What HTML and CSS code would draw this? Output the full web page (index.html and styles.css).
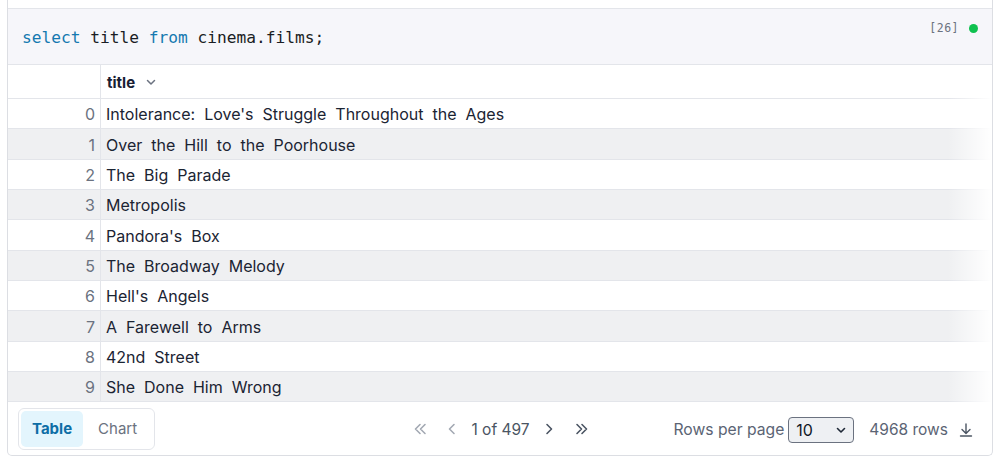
FILE: index.html
```html
<!DOCTYPE html>
<html>
<head>
<meta charset="utf-8">
<link rel="stylesheet" href="styles.css">
</head>
<body>
<div class="card">
  <div class="toolbar"></div>
  <div class="code">
    <pre class="sql"><span class="kw">select</span> title <span class="kw">from</span> cinema.films;</pre>
    <div class="status"><span class="count">[26]</span><span class="dot"></span></div>
  </div>
  <div class="table-wrap">
    <div class="row head">
      <div class="idx"></div>
      <div class="cell"><b>title</b>
        <svg class="chev" width="12" height="12" viewBox="0 0 12 12"><path d="M2.5 4.5 6 8 9.5 4.5" fill="none" stroke="#6b7280" stroke-width="1.5" stroke-linecap="round" stroke-linejoin="round"/></svg>
      </div>
    </div>
    <div class="row"><div class="idx">0</div><div class="cell">Intolerance: Love's Struggle Throughout the Ages</div></div>
    <div class="row alt"><div class="idx">1</div><div class="cell">Over the Hill to the Poorhouse</div></div>
    <div class="row"><div class="idx">2</div><div class="cell">The Big Parade</div></div>
    <div class="row alt"><div class="idx">3</div><div class="cell">Metropolis</div></div>
    <div class="row"><div class="idx">4</div><div class="cell">Pandora's Box</div></div>
    <div class="row alt"><div class="idx">5</div><div class="cell">The Broadway Melody</div></div>
    <div class="row"><div class="idx">6</div><div class="cell">Hell's Angels</div></div>
    <div class="row alt"><div class="idx">7</div><div class="cell">A Farewell to Arms</div></div>
    <div class="row"><div class="idx">8</div><div class="cell">42nd Street</div></div>
    <div class="row alt"><div class="idx">9</div><div class="cell">She Done Him Wrong</div></div>
    <div class="fade"></div>
  </div>
  <div class="footer">
    <div class="tabs">
      <span class="tab active">Table</span>
      <span class="tab">Chart</span>
    </div>
    <div class="pager">
      <svg class="pi dis" width="16" height="16" viewBox="0 0 16 16"><path d="M8 3.5 3.5 8 8 12.5M13 3.5 8.5 8 13 12.5" fill="none" stroke="currentColor" stroke-width="1.6" stroke-linecap="round" stroke-linejoin="round"/></svg>
      <svg class="pi dis" width="16" height="16" viewBox="0 0 16 16"><path d="M10 3.5 5.5 8 10 12.5" fill="none" stroke="currentColor" stroke-width="1.6" stroke-linecap="round" stroke-linejoin="round"/></svg>
      <span class="pages">1 of 497</span>
      <svg class="pi" width="16" height="16" viewBox="0 0 16 16"><path d="M6 3.5 10.5 8 6 12.5" fill="none" stroke="currentColor" stroke-width="1.6" stroke-linecap="round" stroke-linejoin="round"/></svg>
      <svg class="pi" width="16" height="16" viewBox="0 0 16 16"><path d="M3 3.5 7.5 8 3 12.5M8 3.5 12.5 8 8 12.5" fill="none" stroke="currentColor" stroke-width="1.6" stroke-linecap="round" stroke-linejoin="round"/></svg>
    </div>
    <div class="right">
      <span class="rpp">Rows per page</span>
      <span class="select">10
        <svg width="12" height="12" viewBox="0 0 12 12"><path d="M2.5 4.5 6 8 9.5 4.5" fill="none" stroke="#1f2937" stroke-width="1.6" stroke-linecap="round" stroke-linejoin="round"/></svg>
      </span>
      <span class="rows">4968 rows</span>
      <svg class="dl" width="16" height="16" viewBox="0 0 16 16"><path d="M8 2v9M4 7.5 8 11.5 12 7.5M2.5 14h11" fill="none" stroke="#4b5563" stroke-width="1.4" stroke-linecap="round" stroke-linejoin="round"/></svg>
    </div>
  </div>
</div>
</body>
</html>
```
FILE: styles.css
```css
* { box-sizing: border-box; }
html, body { margin: 0; padding: 0; background: #fff; }
body { font-family: "Inter", "Noto Sans", sans-serif; color: #1b2433; }

.card {
  margin-left: 7px;
  width: 986px;
  border: 1px solid #dcdee3;
  border-top: none;
  border-radius: 0 0 5px 5px;
  background: #fff;
  overflow: hidden;
}
.toolbar { height: 9px; border-bottom: 1px solid #e3e5ea; }

.code {
  height: 56px;
  background: #f6f6fa;
  border-bottom: 1px solid #e3e5ea;
  display: flex;
  align-items: center;
  justify-content: space-between;
  padding: 0 14px 0 14px;
  position: relative;
}
.sql {
  margin: 0;
  font-family: "DejaVu Sans Mono", monospace;
  font-size: 16.2px;
  color: #1a1d24;
  padding-top: 2px;
}
.kw { color: #1479b0; }
.status {
  align-self: flex-start;
  margin-top: 12px;
  display: flex;
  align-items: center;
  gap: 8px;
}
.count { font-family: "DejaVu Sans Mono", monospace; font-size: 11.5px; color: #6b7280; letter-spacing: 0.5px; margin-right: 2px; }
.dot { width: 9px; height: 9px; border-radius: 50%; background: #0fc14f; }

.table-wrap { position: relative; }
.row {
  display: flex;
  height: 30.35px;
  border-bottom: 1px solid #e3e5ea;
  align-items: center;
  font-size: 16px;
}
.row.head { height: 34px; font-size: 15px; color: #172033; }
.row.alt { background: #eff0f2; }
.idx {
  width: 93px;
  flex: none;
  height: 100%;
  border-right: 1px solid #e3e5ea;
  text-align: right;
  padding-right: 5px;
  color: #6b7280;
  display: flex;
  align-items: center;
  justify-content: flex-end;
  padding-top: 1px;
}
.cell { padding-left: 5px; padding-top: 1px; word-spacing: 4.5px; display: flex; align-items: center; }
.cell b { font-weight: 700; word-spacing: 0; padding-left: 1px; }
.chev { margin-left: 10px; }
.fade {
  position: absolute;
  right: 0; top: 0; bottom: 0;
  width: 44px;
  background: linear-gradient(to right, rgba(255,255,255,0), #fff);
  pointer-events: none;
}

.footer {
  height: 53px;
  display: grid;
  grid-template-columns: 1fr auto 1fr;
  align-items: center;
  padding: 0 18px 0 10px;
}
.tabs {
  justify-self: start;
  display: flex;
  align-items: center;
  border: 1px solid #e3e5ea;
  border-radius: 6px;
  padding: 2px;
  height: 42px;
}
.tab { padding: 0 15px; height: 36px; line-height: 36px; font-size: 15px; color: #6b7280; border-radius: 5px; }
.tab.active { background: #e3f5fd; color: #0e6ea6; font-weight: 700; padding: 0 11px; }

.pager { display: flex; align-items: center; gap: 0; color: #4b5563; padding-top: 1px; margin-left: 10px; }
.pi { color: #4b5563; margin: 0 7px; }
.pi.dis { color: #a3a9b3; }
.pi:first-child { margin-right: 9px; }
.pi:last-child { margin-left: 10px; }
.pages { font-size: 15.5px; color: #4b5563; margin: 0 4px; }

.right { justify-self: end; display: flex; align-items: center; font-size: 15.7px; color: #5b6474; padding-top: 2px; }
.select {
  margin-left: 4px;
  width: 66px;
  height: 26px;
  border: 1.5px solid #6b7280;
  border-radius: 4px;
  background: #eef0f3;
  color: #111827;
  display: flex;
  align-items: center;
  justify-content: space-between;
  padding: 0 6px 0 7px;
  font-size: 16px;
}
.rows { margin-left: 15px; font-size: 15.5px; }
.dl { margin-left: 10px; }
```
